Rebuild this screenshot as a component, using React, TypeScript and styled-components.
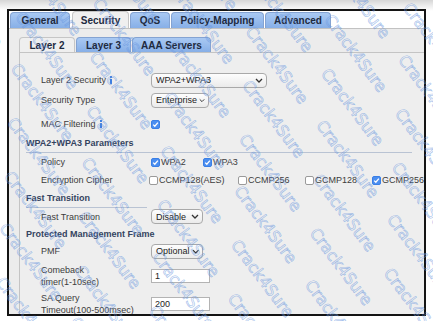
import styled, { createGlobalStyle } from "styled-components";

const GlobalStyle = createGlobalStyle`
  html, body { margin: 0; padding: 0; }
  body {
    width: 433px;
    height: 321px;
    overflow: hidden;
    background: linear-gradient(#d6d6d6 0px, #eeeeee 6px, #ffffff 11px);
    font-family: "Liberation Sans", Arial, sans-serif;
  }
`;

const Page = styled.div`
  position: relative;
  width: 433px;
  height: 321px;
  padding: 9px 7px 0 7px;
  box-sizing: border-box;
`;

const Frame = styled.div`
  height: 307px;
  border: 2px solid #141414;
  box-sizing: border-box;
  background: #ffffff;
  display: flex;
  flex-direction: column;
  overflow: hidden;
`;

const TabBar = styled.div`
  display: flex;
  align-items: flex-end;
  gap: 1px;
  height: 17px;
  padding-left: 1px;
  flex-shrink: 0;
`;

const Tab = styled.div<{ $w: number; $active?: boolean; $h?: number }>`
  width: ${(p) => p.$w}px;
  height: ${(p) => p.$h ?? 16}px;
  box-sizing: border-box;
  display: flex;
  align-items: center;
  justify-content: center;
  font-size: 10px;
  font-weight: 700;
  color: #1e2a3e;
  border: 1px solid ${(p) => (p.$active ? "#c6c6c6" : "#84a3d2")};
  border-bottom: none;
  border-radius: 4px 4px 0 0;
  background: ${(p) =>
    p.$active ? "#efefef" : "linear-gradient(#a9c9f3, #87afe7)"};
`;

const Content = styled.div`
  flex: 1;
  min-height: 0;
  background: #ececec;
  border-top: 1px solid #c2c2c2;
  padding: 8px 0 0 10px;
  display: flex;
  flex-direction: column;
`;

const SubTabBar = styled.div`
  display: flex;
  gap: 1px;
  height: 15px;
  flex-shrink: 0;
`;

const Panel = styled.div`
  flex: 1;
  background: #eeeeee;
  border-left: 1px solid #c4c4c4;
  border-top: 1px solid #c4c4c4;
  padding: 17px 0 0 6px;
  display: flex;
  flex-direction: column;
`;

const Row = styled.div<{ $h: number; $mt?: number }>`
  display: flex;
  align-items: center;
  height: ${(p) => p.$h}px;
  margin-top: ${(p) => p.$mt ?? 0}px;
  flex-shrink: 0;
`;

const Label = styled.div`
  width: 125px;
  padding-left: 15px;
  box-sizing: border-box;
  font-size: 9px;
  line-height: 12px;
  color: #3c3c3c;
  display: flex;
  align-items: center;
  gap: 3px;
`;

const SectionHeader = styled.div<{ $h: number; $line?: "full" | number }>`
  height: ${(p) => p.$h}px;
  display: flex;
  align-items: center;
  font-size: 9px;
  font-weight: 700;
  color: #34435f;
  width: ${(p) => (typeof p.$line === "number" ? `${p.$line}px` : "auto")};
  margin-right: 12px;
  border-bottom: ${(p) => (p.$line ? "1px solid #b9c3d3" : "none")};
  flex-shrink: 0;
`;

const Select = styled.div<{ $w: number }>`
  width: ${(p) => p.$w}px;
  height: 15px;
  box-sizing: border-box;
  border: 1px solid #a9a9a9;
  border-radius: 4px;
  background: linear-gradient(#fdfdfd, #ebebeb);
  font-size: 9px;
  color: #222;
  padding: 0 3px 0 4px;
  display: flex;
  align-items: center;
  justify-content: space-between;
  gap: 2px;
`;

const TextInput = styled.div`
  width: 59px;
  height: 14px;
  box-sizing: border-box;
  border: 1px solid #b3b3b3;
  background: #ffffff;
  font-size: 9px;
  color: #222;
  padding-left: 3px;
  display: flex;
  align-items: center;
`;

const Options = styled.div`
  display: flex;
  align-items: center;
`;

const Option = styled.div<{ $w?: number }>`
  width: ${(p) => (p.$w ? `${p.$w}px` : "auto")};
  display: flex;
  align-items: center;
  gap: 1px;
  font-size: 9px;
  color: #3c3c3c;
`;

const Box = styled.span<{ $on?: boolean }>`
  width: 9px;
  height: 9px;
  box-sizing: border-box;
  border-radius: 2px;
  border: 1px solid ${(p) => (p.$on ? "#3a7fe6" : "#9a9a9a")};
  background: ${(p) => (p.$on ? "#4b8ef0" : "#ffffff")};
  display: inline-flex;
  align-items: center;
  justify-content: center;
  flex-shrink: 0;
`;

const Watermark = styled.div`
  position: absolute;
  inset: 0;
  overflow: hidden;
  pointer-events: none;
`;

const WatermarkSheet = styled.div`
  position: absolute;
  left: -350px;
  top: -400px;
  width: 1100px;
  transform: rotate(53deg);
  transform-origin: 550px 550px;
  font-family: "DejaVu Sans", sans-serif;
  font-size: 16px;
  line-height: 35px;
  white-space: pre;
  color: transparent;
  -webkit-text-stroke: 0.65px rgba(105, 150, 222, 0.6);
`;

const WmLine = styled.div<{ $shift: number }>`
  margin-left: ${(p) => p.$shift}px;
`;

const Chevron = () => (
  <svg width="8" height="5" viewBox="0 0 8 5">
    <path d="M1 1 L4 4 L7 1" fill="none" stroke="#333" strokeWidth="1.3" />
  </svg>
);

const Check = () => (
  <svg width="7" height="7" viewBox="0 0 7 7">
    <path d="M1.2 3.6 L2.8 5.2 L5.9 1.6" fill="none" stroke="#fff" strokeWidth="1.3" />
  </svg>
);

const Info = () => (
  <svg width="4" height="8" viewBox="0 0 4 8">
    <rect x="1" y="0" width="2" height="2" fill="#3f7fe0" />
    <rect x="1" y="3" width="2" height="5" fill="#3f7fe0" />
  </svg>
);

const CheckOption = ({ on, text, w }: { on?: boolean; text: string; w?: number }) => (
  <Option $w={w}>
    <Box $on={on}>{on && <Check />}</Box>
    {text}
  </Option>
);

const wmText = Array(14).fill("Crack4Sure").join("     ");

export default function App() {
  return (
    <>
      <GlobalStyle />
      <Page>
        <Frame>
          <TabBar>
            <Tab $w={60}>General</Tab>
            <Tab $w={57} $active $h={17} style={{ marginLeft: 1 }}>Security</Tab>
            <Tab $w={40}>QoS</Tab>
            <Tab $w={93}>Policy-Mapping</Tab>
            <Tab $w={66}>Advanced</Tab>
          </TabBar>
          <Content>
            <SubTabBar>
              <Tab $w={56} $h={15} $active>Layer 2</Tab>
              <Tab $w={55} $h={15}>Layer 3</Tab>
              <Tab $w={79} $h={15}>AAA Servers</Tab>
            </SubTabBar>
            <Panel>
              <Row $h={20}>
                <Label>Layer 2 Security <Info /></Label>
                <Select $w={116}>WPA2+WPA3 <Chevron /></Select>
              </Row>
              <Row $h={20}>
                <Label>Security Type</Label>
                <Select $w={58}>Enterprise <Chevron /></Select>
              </Row>
              <Row $h={20} $mt={4}>
                <Label>MAC Filtering <Info /></Label>
                <Box $on><Check /></Box>
              </Row>
              <SectionHeader $h={18} $line="full">WPA2+WPA3 Parameters</SectionHeader>
              <Row $h={18}>
                <Label>Policy</Label>
                <Options>
                  <CheckOption on text="WPA2" w={52} />
                  <CheckOption on text="WPA3" />
                </Options>
              </Row>
              <Row $h={18}>
                <Label>Encryption Cipher</Label>
                <Options>
                  <CheckOption text="CCMP128(AES)" w={89} />
                  <CheckOption text="CCMP256" w={67} />
                  <CheckOption text="GCMP128" w={67} />
                  <CheckOption on text="GCMP256" />
                </Options>
              </Row>
              <SectionHeader $h={18} $line={121}>Fast Transition</SectionHeader>
              <Row $h={17}>
                <Label>Fast Transition</Label>
                <Select $w={52}>Disable <Chevron /></Select>
              </Row>
              <SectionHeader $h={18}>Protected Management Frame</SectionHeader>
              <Row $h={16}>
                <Label>PMF</Label>
                <Select $w={52}>Optional <Chevron /></Select>
              </Row>
              <Row $h={28} $mt={3}>
                <Label>Comeback<br />timer(1-10sec)</Label>
                <TextInput>1</TextInput>
              </Row>
              <Row $h={27}>
                <Label>SA Query<br />Timeout(100-500msec)</Label>
                <TextInput>200</TextInput>
              </Row>
            </Panel>
          </Content>
        </Frame>
        <Watermark aria-hidden>
          <WatermarkSheet>
            {Array.from({ length: 30 }).map((_, i) => (
              <WmLine key={i} $shift={(i * 41) % 120}>{wmText}</WmLine>
            ))}
          </WatermarkSheet>
        </Watermark>
      </Page>
    </>
  );
}
